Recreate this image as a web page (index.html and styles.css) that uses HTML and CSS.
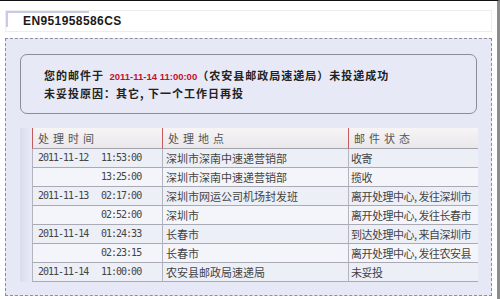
FILE: index.html
```html
<!DOCTYPE html>
<html lang="zh">
<head>
<meta charset="utf-8">
<title>邮件查询</title>
<link rel="stylesheet" href="styles.css">
</head>
<body>
<div class="page">
  <div class="tab">EN951958586CS</div>
  <div class="panel">
    <div class="notice">
      <div>您的邮件于 <span class="red">2011-11-14 11:00:00</span>（农安县邮政局速递局）未投递成功</div>
      <div>未妥投原因：其它, 下一个工作日再投</div>
    </div>
    <div class="grid-wrap">
      <div class="strip"></div>
      <table class="grid">
        <colgroup><col class="c1"><col class="c2"><col class="c3"></colgroup>
        <thead>
          <tr><th>处理时间</th><th>处理地点</th><th>邮件状态</th></tr>
        </thead>
        <tbody>
          <tr class="odd"><td class="t"><span class="d">2011-11-12</span>11:53:00</td><td class="p">深圳市深南中速递营销部</td><td class="s">收寄</td></tr>
          <tr class="even"><td class="t"><span class="d"></span>13:25:00</td><td class="p">深圳市深南中速递营销部</td><td class="s">揽收</td></tr>
          <tr class="odd"><td class="t"><span class="d">2011-11-13</span>02:17:00</td><td class="p">深圳市网运公司机场封发班</td><td class="s">离开处理中心, 发往深圳市</td></tr>
          <tr class="even"><td class="t"><span class="d"></span>02:52:00</td><td class="p">深圳市</td><td class="s">离开处理中心, 发往长春市</td></tr>
          <tr class="odd"><td class="t"><span class="d">2011-11-14</span>01:24:33</td><td class="p">长春市</td><td class="s">到达处理中心, 来自深圳市</td></tr>
          <tr class="even"><td class="t"><span class="d"></span>02:23:15</td><td class="p">长春市</td><td class="s">离开处理中心, 发往农安县</td></tr>
          <tr class="odd"><td class="t"><span class="d">2011-11-14</span>11:00:00</td><td class="p">农安县邮政局速递局</td><td class="s">未妥投</td></tr>
        </tbody>
      </table>
    </div>
  </div>
</div>
</body>
</html>
```

FILE: styles.css
```css
* { box-sizing: border-box; }
html, body { margin: 0; padding: 0; }
body {
  background: #fff;
  font-family: "Liberation Sans", Arial, sans-serif;
}
.page {
  width: 500px;
  height: 299px;
  border-top: 1px solid #111;
  border-right: 3px solid #8c8c8c;
  padding: 9px 5px 0 5px;
  overflow: hidden;
}
.tab {
  height: 22px;
  border: 1px solid #ededed;
  background:
    linear-gradient(#c8cae6, #c8cae6) 0 0 / 83px 2px no-repeat,
    linear-gradient(#c8cae6, #c8cae6) 0 0 / 2px 16px no-repeat,
    #fff;
  padding-left: 17px;
  font-size: 12px;
  font-weight: bold;
  letter-spacing: 0.4px;
  line-height: 20px;
  color: #1a1a1a;
}
.panel {
  margin-top: 6px;
  border: 1px dashed #8d8f98;
  background: #e6e8f5;
  padding: 15px 14px 13px;
}
.notice {
  height: 60px;
  border: 1px solid #8a8c98;
  border-radius: 7px;
  background: #e8e9f6;
  padding: 12px 10px 0 23px;
  font-family: "Noto Sans CJK SC", sans-serif;
  font-size: 11px;
  font-weight: bold;
  letter-spacing: 1px;
  line-height: 16px;
  color: #222;
  white-space: nowrap;
}
.red {
  font-family: "Liberation Sans", Arial, sans-serif;
  font-size: 9.5px;
  font-weight: bold;
  letter-spacing: 0;
  margin-left: 2px;
  color: #c4102c;
}
.grid-wrap {
  margin-top: 14px;
  display: flex;
}
.strip {
  flex: none;
  width: 12px;
  background: linear-gradient(to right, #dadded, #e9eaf6);
}
.grid {
  flex: none;
  width: 446px;
  table-layout: fixed;
  border-collapse: separate;
  border-spacing: 0;
  font-family: "Noto Sans CJK SC", sans-serif;
  font-size: 11px;
  color: #444;
}
.c1 { width: 130px; }
.c2 { width: 186px; }
.c3 { width: 130px; }
.grid th {
  height: 21px;
  padding: 0 0 0 5px;
  text-align: left;
  font-weight: normal;
  color: #555;
  letter-spacing: 4px;
  line-height: 20px;
  border-left: 1px solid #c65a5e;
  border-bottom: 1px solid #a2a3ad;
  background: linear-gradient(#f6f4f4, #eae8eb);
}
.grid td {
  height: 19px;
  padding: 0;
  line-height: 18px;
  border-left: 1px solid #b3b4be;
  border-bottom: 1px solid #a9aab4;
  white-space: nowrap;
  overflow: hidden;
}
.grid tr.odd td { background: #edeff7; }
.grid tr.even td { background: #f4f5fa; }
.grid td.t {
  padding-left: 5px;
  font-family: "DejaVu Sans Mono", monospace;
  font-size: 10px;
  letter-spacing: -1px;
}
.grid .d {
  display: inline-block;
  width: 63px;
}
.grid td.p { padding-left: 3px; }
.grid td.s {
  padding-left: 2px;
  letter-spacing: -0.5px;
}
```
